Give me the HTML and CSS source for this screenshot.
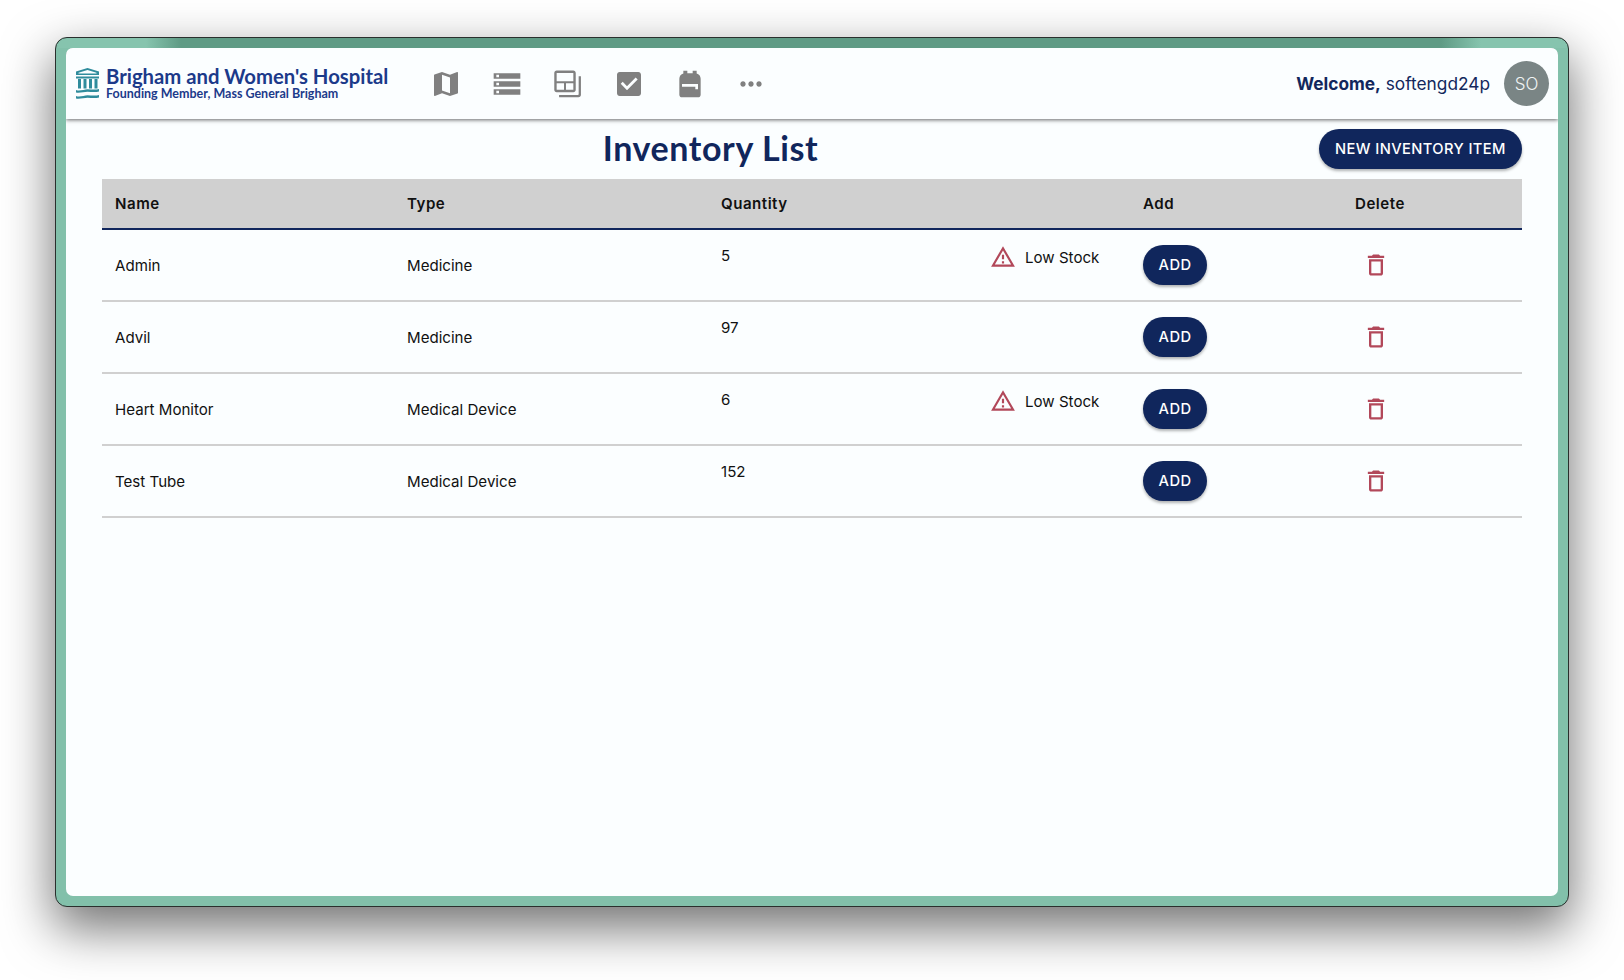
FILE: index.html
```html
<!DOCTYPE html>
<html lang="en">
<head>
<meta charset="utf-8">
<title>Inventory List</title>
<link rel="stylesheet" href="styles.css">
</head>
<body>
<div class="window">
  <div class="app">
    <header class="topbar">
      <div class="logo">
        <svg class="logo-mark" viewBox="0 0 23 32" width="23" height="32">
          <path class="teal" fill-rule="evenodd" d="M11.500 0 23 3.500V7H0V3.500zM11.500 2 2.500 4.700V5.400H20.500V4.700z"/>
          <path class="teal" d="M0 8.500h23V10.500H0zM2 11h3v9.500H2zM7.500 11h3v9.500h-3zM13 11h3v9.500h-3zM18.500 11h3v9.500h-3z"/>
          <path class="teal" d="M0 22c4 1.500 8-.8 11.500-.8s7.500 1 11.500-.2v2.500c-4 1.200-8 .2-11.500.2S4 25.200 0 24.500zM0 28c4 1.500 8-.8 11.500-.8s7.500 1 11.500-.2v2.500c-4 1.200-8 .2-11.500.2S4 31.200 0 30.500z"/>
        </svg>
        <div class="logo-text">
          <div class="logo-title">Brigham and Women's Hospital</div>
          <div class="logo-sub">Founding Member, Mass General Brigham</div>
        </div>
      </div>
      <nav class="nav">
        <span class="nav-item"><svg viewBox="0 0 24 24"><path d="m20.500 3-.16.03L15 5.100 9 3 3.360 4.900c-.21.07-.36.25-.36.48V20.500c0 .28.22.5.5.5l.16-.03L9 18.900l6 2.100 5.640-1.900c.21-.07.36-.25.36-.48V3.500c0-.28-.22-.5-.5-.5M15 19l-6-2.110V5l6 2.110z"/></svg></span>
        <span class="nav-item"><svg viewBox="0 0 24 24"><path d="M2 20h20v-4H2zm2-3h2v2H4zM2 4v4h20V4zm4 3H4V5h2zm-4 7h20v-4H2zm2-3h2v2H4z"/></svg></span>
        <span class="nav-item"><svg viewBox="0 0 24 24"><path fill-rule="evenodd" d="M3.500 1.900H16c1 0 1.800.8 1.800 1.800v12.600c0 1-.8 1.800-1.800 1.800H3.500c-1 0-1.800-.8-1.800-1.800V3.700c0-1 .8-1.800 1.800-1.800zM3.500 3.800v6.100H16V3.800zM3.500 11.400v5h5.500v-5zM10.500 11.400v5H16v-5z"/><path d="M20 6.100h1.700v14c0 1-.8 1.800-1.800 1.800H5.300v-1.700H19.500c.3 0 .5-.2.5-.5z"/></svg></span>
        <span class="nav-item"><svg viewBox="0 0 24 24"><path d="M19 3H5c-1.110 0-2 .9-2 2v14c0 1.100.89 2 2 2h14c1.110 0 2-.9 2-2V5c0-1.100-.89-2-2-2zm-8.500 13.600-4.700-4.700 1.500-1.500 3.200 3.200 6.500-6.500 1.500 1.500z"/></svg></span>
        <span class="nav-item"><svg viewBox="0 0 24 24"><path d="M20 8v12c0 1.100-.9 2-2 2H6c-1.100 0-2-.9-2-2V8c0-1.860 1.280-3.410 3-3.860V2h3v2h4V2h3v2.140c1.720.45 3 2 3 3.860zM6 12v2h10v2h2v-4H6z"/></svg></span>
        <span class="nav-item"><svg viewBox="0 0 24 24"><path d="M6 10c-1.100 0-2 .9-2 2s.9 2 2 2 2-.9 2-2-.9-2-2-2m12 0c-1.100 0-2 .9-2 2s.9 2 2 2 2-.9 2-2-.9-2-2-2m-6 0c-1.100 0-2 .9-2 2s.9 2 2 2 2-.9 2-2-.9-2-2-2"/></svg></span>
      </nav>
      <div class="user">
        <span class="welcome"><b>Welcome,</b> softengd24p</span>
        <span class="avatar">SO</span>
      </div>
    </header>
    <main class="content">
      <div class="title-row">
        <h1 class="title">Inventory List</h1>
        <button class="pill pill-new">NEW INVENTORY ITEM</button>
      </div>
      <table class="inventory">
        <colgroup>
          <col class="col-name"><col class="col-type"><col class="col-qty"><col class="col-add"><col class="col-del">
        </colgroup>
        <thead>
          <tr><th>Name</th><th>Type</th><th>Quantity</th><th>Add</th><th>Delete</th></tr>
        </thead>
        <tbody>
          <tr>
            <td>Admin</td><td>Medicine</td>
            <td class="qty"><div class="qty-wrap"><span class="qty-num">5</span><span class="low"><svg class="warn" viewBox="0 0 24 24"><path d="M12 5.990 19.530 19H4.470zM12 2 1 21h22zm1 14h-2v2h2zm0-6h-2v4h2z"/></svg>Low Stock</span></div></td>
            <td><button class="pill pill-add">ADD</button></td>
            <td class="del"><svg class="trash" viewBox="0 0 24 24"><path d="M6 19c0 1.100.9 2 2 2h8c1.100 0 2-.9 2-2V7H6zM8 9h8v10H8zm7.500-5-1-1h-5l-1 1H5v2h14V4z"/></svg></td>
          </tr>
          <tr>
            <td>Advil</td><td>Medicine</td>
            <td class="qty"><div class="qty-wrap"><span class="qty-num">97</span></div></td>
            <td><button class="pill pill-add">ADD</button></td>
            <td class="del"><svg class="trash" viewBox="0 0 24 24"><path d="M6 19c0 1.100.9 2 2 2h8c1.100 0 2-.9 2-2V7H6zM8 9h8v10H8zm7.500-5-1-1h-5l-1 1H5v2h14V4z"/></svg></td>
          </tr>
          <tr>
            <td>Heart Monitor</td><td>Medical Device</td>
            <td class="qty"><div class="qty-wrap"><span class="qty-num">6</span><span class="low"><svg class="warn" viewBox="0 0 24 24"><path d="M12 5.990 19.530 19H4.470zM12 2 1 21h22zm1 14h-2v2h2zm0-6h-2v4h2z"/></svg>Low Stock</span></div></td>
            <td><button class="pill pill-add">ADD</button></td>
            <td class="del"><svg class="trash" viewBox="0 0 24 24"><path d="M6 19c0 1.100.9 2 2 2h8c1.100 0 2-.9 2-2V7H6zM8 9h8v10H8zm7.500-5-1-1h-5l-1 1H5v2h14V4z"/></svg></td>
          </tr>
          <tr>
            <td>Test Tube</td><td>Medical Device</td>
            <td class="qty"><div class="qty-wrap"><span class="qty-num">152</span></div></td>
            <td><button class="pill pill-add">ADD</button></td>
            <td class="del"><svg class="trash" viewBox="0 0 24 24"><path d="M6 19c0 1.100.9 2 2 2h8c1.100 0 2-.9 2-2V7H6zM8 9h8v10H8zm7.500-5-1-1h-5l-1 1H5v2h14V4z"/></svg></td>
          </tr>
        </tbody>
      </table>
    </main>
  </div>
</div>
</body>
</html>
```

FILE: styles.css
```css
* { box-sizing: border-box; }
html, body { margin: 0; height: 100%; }
body {
  background: #fff;
  padding: 37px 0 0 55px;
  font-family: Inter, "Liberation Sans", sans-serif;
  overflow: hidden;
}
.window {
  width: 1514px;
  height: 870px;
  padding: 10px;
  border: 1px solid #2a2f2d;
  border-radius: 12px;
  background:
    linear-gradient(90deg, #86c4ae 0, #86c4ae 90px, #5f9b85 125px, #5f9b85 1385px, #86c4ae 1425px) top / 100% 10px no-repeat,
    #82c0aa;
  box-shadow: 0 20px 50px 2px rgba(0, 0, 0, .55);
}
.app {
  height: 100%;
  background: #fbfeff;
  border-radius: 7px;
  overflow: hidden;
}
.topbar {
  height: 71px;
  display: flex;
  align-items: center;
  padding: 0 9px 0 10px;
  background: #fbfeff;
  box-shadow: 0 1px 4px rgba(0, 0, 0, .6);
  position: relative;
}
.logo { display: flex; align-items: center; gap: 7px; width: 339px; }
.logo-mark { flex: none; }
.teal { fill: #2f8c9c; }
.logo-text { color: #1c3a8a; font-family: Lato, sans-serif; padding-bottom: 2px; }
.logo-title { font-size: 20.300px; font-weight: 700; line-height: 22px; white-space: nowrap; }
.logo-sub { font-size: 12.500px; font-weight: 700; line-height: 14px; white-space: nowrap; }
.nav { display: flex; }
.nav-item { width: 61px; height: 48px; display: flex; align-items: center; justify-content: center; }
.nav-item svg { width: 32px; height: 32px; fill: #808080; }
.user { margin-left: auto; display: flex; align-items: center; gap: 14px; }
.welcome { color: #12275c; font-size: 17.300px; }
.welcome b { font-weight: 700; }
.avatar {
  width: 45px; height: 45px; border-radius: 50%;
  background: #7a8585; color: #f0f4f4;
  display: flex; align-items: center; justify-content: center;
  font-size: 17px; font-weight: 300;
}
.content { padding: 10px 35px 0 36px; }
.title-row { display: flex; align-items: center; height: 40px; margin-bottom: 10px; }
.title {
  flex: 1; margin: 0 0 3px; text-align: center;
  font-family: Lato, sans-serif; font-weight: 700; font-size: 34px; line-height: 37px; color: #10265c;
  letter-spacing: .6px;
}
.pill {
  border: 0; height: 40px; border-radius: 20px;
  background: #10265c; color: #fff;
  font-family: Inter, sans-serif; font-weight: 500; font-size: 14.700px; letter-spacing: .4px;
  box-shadow: 0 2px 3px rgba(0, 0, 0, .3);
  padding: 0 0 1px;
}
.pill-new { width: 203px; margin-right: 1px; }
.pill-add { width: 64px; }
.inventory { width: 1420px; table-layout: fixed; border-collapse: collapse; font-size: 15.100px; color: #111; }
.col-name { width: 292px; }
.col-type { width: 314px; }
.col-qty { width: 422px; }
.col-add { width: 212px; }
.col-del { width: 180px; }
.inventory thead tr { background: #d0d0d0; border-bottom: 2px solid #10265c; height: 50px; }
.inventory th { text-align: left; font-weight: 600; padding: 0 13px; letter-spacing: .5px; height: 50px; }
.inventory td { height: 72px; padding: 0 13px; vertical-align: middle; }
.inventory tbody tr { border-bottom: 2px solid #d0d0d0; }
.inventory td.qty { vertical-align: top; padding-top: 16px; }
.qty-wrap { display: flex; align-items: flex-start; }
.qty-num { flex: 0 0 269px; line-height: 20px; }
.low { display: flex; align-items: center; gap: 9px; line-height: 22px; }
.warn { width: 26px; height: 26px; fill: #b2485a; flex: none; margin-top: -2px; }
.inventory td.del { padding-left: 20px; }
.trash { display: block; width: 28px; height: 28px; fill: #b2485a; }
```
